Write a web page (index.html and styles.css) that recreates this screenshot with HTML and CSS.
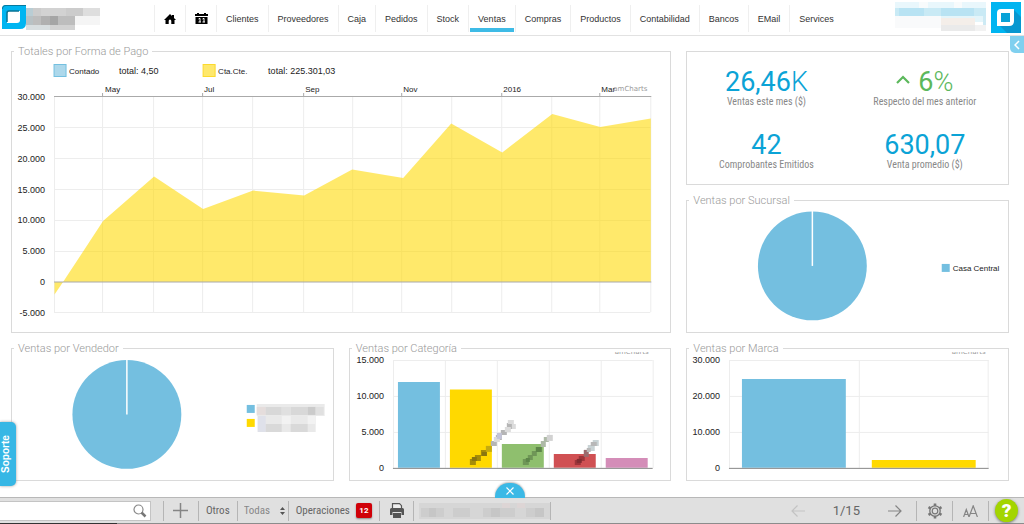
FILE: index.html
```html
<!DOCTYPE html>
<html lang="es">
<head>
<meta charset="utf-8">
<title>Ventas</title>
<link rel="stylesheet" href="styles.css">
</head>
<body>
<header class="topbar">
  <div class="brand">
    <svg class="brand-logo" width="24" height="24" viewBox="0 0 24 24" aria-hidden="true">
      <path d="M4 0H24V18Q24 24 18 24H0V4Q0 0 4 0Z" fill="#00b5f1"/>
      <path d="M0 4Q0 0 4 0H24V1H4Q1 1 1 4Z" fill="#067a9f"/>
      <path d="M7 6H18V15Q18 18 15 18H5V8Q5 6 7 6Z" fill="#fff"/>
      <path d="M5 17V8Q5 6 7 6H17" fill="none" stroke="#087394" stroke-width="1.5"/>
    </svg>
    <svg class="brand-name" width="84" height="26" viewBox="0 0 84 26" aria-hidden="true">
      <path fill="#b9cdd4" d="M0 3h7v8H0z"/><path fill="#ccc" d="M7 3h8v8H7zM40 3h17v8H40z"/><path fill="#d2d2d2" d="M15 3h25v8H15z"/><path fill="#dedede" d="M57 3h17v8H57z"/>
      <path fill="#b8c1c4" d="M0 11h7v9H0z"/><path fill="#bdbdbd" d="M7 11h8v9H7zM32 11h17v9H32z"/><path fill="#b0b0b0" d="M15 11h9v9h-9z"/><path fill="#a5a5a5" d="M24 11h8v9h-8z"/><path fill="#f5f5f5" d="M49 11h25v9H49z"/>
      <path fill="#d8dee0" d="M0 20h24v5H0z"/><path fill="#d2d2d2" d="M24 20h25v5H24z"/>
    </svg>
  </div>
  <nav class="menu" aria-label="Principal">
    <a class="menu-item menu-icon" href="#" aria-label="Inicio"><svg width="12" height="10" viewBox="0 0 12 10"><path d="M6 0L8 2V1H10V4L12 6H10.500V10H7.300V7Q7.300 5.500 6 5.500T4.700 7V10H1.500V6H0Z"/></svg></a>
    <a class="menu-item menu-icon" href="#" aria-label="Agenda"><svg width="13" height="11" viewBox="0 0 13 11"><path d="M0 1H2V0H4V1H9V0H11V1H13V3H0ZM.5 4H12.500V11H.5Z"/><path d="M3.500 6L5 5.300V9M3.500 9H6M7.500 6L9 5.300V9M7.500 9H10" fill="none" stroke="#fff"/></svg></a>
    <a class="menu-item" href="#">Clientes</a>
    <a class="menu-item" href="#">Proveedores</a>
    <a class="menu-item" href="#">Caja</a>
    <a class="menu-item" href="#">Pedidos</a>
    <a class="menu-item" href="#">Stock</a>
    <a class="menu-item menu-active" href="#" aria-current="page">Ventas</a>
    <a class="menu-item" href="#">Compras</a>
    <a class="menu-item" href="#">Productos</a>
    <a class="menu-item" href="#">Contabilidad</a>
    <a class="menu-item" href="#">Bancos</a>
    <a class="menu-item" href="#">EMail</a>
    <a class="menu-item" href="#">Services</a>
  </nav>
  <div class="account">
    <svg width="93" height="30" viewBox="0 0 93 30" aria-hidden="true">
      <path fill="#e9f7fc" d="M1 0h91v6H1z"/><path fill="#f8fbfc" d="M25 0h9v6h-9zM60 0h8v6h-8z"/>
      <path fill="#c9eaf5" d="M1 6h91v8H1z"/><path fill="#b8e3f3" d="M5 6h25v8H5zM47 6h33v8H47z"/>
      <path fill="#e4f5fa" d="M1 14h91v6H1z"/><path fill="#f9fafb" d="M1 14h46v12H1z"/><path fill="#cdeaf4" d="M89 14h3v9h-3z"/>
      <path fill="#f4eee9" d="M47 16h34v8H47z"/><path fill="#eaeaea" d="M47 23h34v6H47z"/><path fill="#f2f2f2" d="M81 23h11v6H81z"/>
    </svg>
    <svg width="30" height="31" viewBox="0 0 30 31" aria-hidden="true">
      <path d="M0 0H30V31H0Z" fill="#00b5f1"/><path d="M7 22L23 8L30 15V31H16Z" fill="#0797d0"/>
      <path d="M10 7H23V19Q23 24 18 24H6V11Q6 7 10 7Z" fill="#fff"/><path d="M10 11H19V20H10Z" fill="#08a2d7"/>
    </svg>
    <button class="drawer" type="button" aria-label="Abrir panel"><svg width="6" height="10" viewBox="0 0 6 10"><path d="M5 1L1 5L5 9" fill="none" stroke="#fff" stroke-width="1.500"/></svg></button>
  </div>
</header>

<main class="board">
  <section class="panel panel-wide">
    <h2 class="panel-title">Totales por Forma de Pago</h2>
    <svg class="chart" viewBox="12 52 658 280" role="img" aria-label="Totales por Forma de Pago">
      <path d="M54 64.500h12v12H54z" fill="#add8eb" stroke="#74c0e0"/><text x="69" y="74" class="small">Contado</text><text x="119" y="74">total: 4,50</text>
      <path d="M203 64.500h12v12h-12z" fill="#fee86c" stroke="#fcda2d"/><text x="218" y="74" class="small">Cta.Cte.</text><text x="268" y="74">total: 225.301,03</text>
      <path class="grid" d="M54 127.500H650M54 158.500H650M54 189.500H650M54 220.500H650M54 251.500H650M54 312.500H650M54.500 97V312M102.500 97V312M153.500 97V312M202.500 97V312M252.500 97V312M303.500 97V312M352.500 97V312M401.500 97V312M451.500 97V312M501.500 97V312M551.500 97V312M599.500 97V312M650.500 97V312"/>
      <path d="M54.500 282V294.500L63 282L103 221L154 176.500L203 209L253 190.500L304 195.500L352 169.500L403 178L451 123.500L502 152.500L552 114L600 127L650.500 118.500V282Z" fill="#ffd900" fill-opacity=".58"/>
      <path class="axis" d="M54 96.500H651M102.500 93V97M202.500 93V97M303.500 93V97M401.500 93V97M501.500 93V97M599.500 93V97M54 282H651"/>
      <g class="small"><text x="105" y="92">May</text><text x="204" y="92">Jul</text><text x="305" y="92">Sep</text><text x="403" y="92">Nov</text><text x="503" y="92">2016</text><text x="601" y="92">Mar</text></g>
      <text x="647" y="91" class="credit">amCharts</text>
      <g class="scale"><text x="45" y="100">30.000</text><text x="45" y="131">25.000</text><text x="45" y="162">20.000</text><text x="45" y="193">15.000</text><text x="45" y="223">10.000</text><text x="45" y="254">5.000</text><text x="45" y="285">0</text><text x="45" y="316">-5.000</text></g>
    </svg>
  </section>

  <section class="panel kpis" aria-label="Indicadores">
    <div class="kpi"><strong class="kpi-value">26,46<span class="unit">K</span></strong><span class="kpi-label">Ventas este mes ($)</span></div>
    <div class="kpi"><strong class="kpi-value kpi-up"><svg class="caret" width="14" height="20" viewBox="0 0 14 20" aria-hidden="true"><path d="M1 8L7 2L13 8" fill="none" stroke="#5cb85c" stroke-width="2.200"/></svg> 6<span class="unit">%</span></strong><span class="kpi-label">Respecto del mes anterior</span></div>
    <div class="kpi"><strong class="kpi-value">42</strong><span class="kpi-label">Comprobantes Emitidos</span></div>
    <div class="kpi"><strong class="kpi-value">630,07</strong><span class="kpi-label">Venta promedio ($)</span></div>
  </section>

  <section class="panel">
    <h2 class="panel-title">Ventas por Sucursal</h2>
    <svg class="chart" viewBox="687 201 321 131" role="img" aria-label="Ventas por Sucursal">
      <circle cx="812.500" cy="266" r="54.500" fill="#74bfe0"/><path d="M812.500 211V266" stroke="#fff" stroke-width="1.500"/>
      <path d="M942 264h8v8h-8z" fill="#74bfe0"/><text x="953" y="271" class="small">Casa Central</text>
    </svg>
  </section>

  <section class="panel">
    <h2 class="panel-title">Ventas por Vendedor</h2>
    <svg class="chart" viewBox="12 349 321 131" role="img" aria-label="Ventas por Vendedor">
      <circle cx="127" cy="414.500" r="54.500" fill="#74bfe0"/><path d="M127 359V414.500" stroke="#fff" stroke-width="1.500"/>
      <path d="M247 405h8v8h-8z" fill="#74bfe0"/><path d="M247 419h8v8h-8z" fill="#ffd900"/>
      <path fill="#eaeaea" d="M257 404h68v12h-68z"/><path fill="#e5dddc" d="M257 407h9v8h-9z"/><path fill="#d8d8d8" d="M266 407h16v8h-16zM291 407h17v8h-17z"/><path fill="#cbcbcb" d="M308 407h8v8h-8z"/><path fill="#e0e0e0" d="M282 407h9v8h-9zM316 407h8v8h-8z"/>
      <path fill="#e9e9e9" d="M258 416h58v16h-58z"/><path fill="#dfe1ea" d="M258 416h8v16h-8z"/><path fill="#d9d9d9" d="M266 424h16v8h-16zM291 424h17v8h-17z"/><path fill="#f2f2f2" d="M308 416h8v8h-8zM282 416h9v8h-9z"/>
    </svg>
  </section>

  <section class="panel">
    <h2 class="panel-title">Ventas por Categoría</h2>
    <svg class="chart" viewBox="349 349 321 131" role="img" aria-label="Ventas por Categoría">
      <defs><clipPath id="cut-cat"><path d="M600 352h60v5h-60z"/></clipPath></defs>
      <text x="648" y="354" class="credit" clip-path="url(#cut-cat)">amCharts</text>
      <path class="grid" d="M392 360.500H652M392 396.500H652M392 432.500H652M392.500 360V468M444.500 360V468M496.500 360V468M548.500 360V468M600.500 360V468M652.500 360V468"/>
      <path fill="#74bfe0" d="M397 382h42v86h-42z"/><path fill="#ffd900" d="M449 389.500h42V468h-42z"/><path fill="#8fbf6e" d="M501 444h42v24h-42z"/><path fill="#d05053" d="M553 454h42v14h-42z"/><path fill="#d48db8" d="M605 458h42v10h-42z"/>
      <path class="base" d="M392 468.500H652"/>
      <path fill="#a58d08" d="M469 459h6v6h-6zM474 455h6v6h-6zM480 450h6v6h-6z"/><path fill="#897710" d="M471 457h5v4h-5zM481 452h5v4h-5z"/><path fill="#c4aa10" d="M485 446h6v6h-6z"/>
      <path fill="#b5b5b5" d="M490 441h6v5h-6zM495 435h6v5h-6zM500 430h6v5h-6zM506 423h6v6h-6z"/><path fill="#dcdcdc" d="M493 437h6v5h-6zM504 427h6v5h-6zM507 420h6v4h-6zM511 424h4v5h-4z"/><path fill="#c3c4d7" d="M496 433h5v6h-5z"/>
      <path fill="#6f9657" d="M522 459h6v6h-6zM527 455h5v5h-5zM531 451h5v5h-5z"/><path fill="#5d8649" d="M535 447h6v5h-6zM525 458h4v4h-4z"/><path fill="#aebaa7" d="M540 441h5v6h-5zM543 437h5v5h-5z"/><path fill="#d2d2d2" d="M546 435h6v6h-6z"/>
      <path fill="#9d353a" d="M574 460h6v5h-6zM578 456h6v5h-6z"/><path fill="#812d32" d="M576 459h5v4h-5z"/><path fill="#9b6a6d" d="M583 450h5v7h-5z"/><path fill="#c9d3d5" d="M587 445h7v6h-7zM592 440h6v6h-6z"/><path fill="#b8b8b8" d="M590 442h6v4h-6zM586 448h4v4h-4z"/>
      <g class="scale"><text x="383" y="363">15.000</text><text x="383" y="399">10.000</text><text x="383" y="435">5.000</text><text x="383" y="471">0</text></g>
    </svg>
  </section>

  <section class="panel">
    <h2 class="panel-title">Ventas por Marca</h2>
    <svg class="chart" viewBox="687 349 321 131" role="img" aria-label="Ventas por Marca">
      <defs><clipPath id="cut-brand"><path d="M940 352h60v5h-60z"/></clipPath></defs>
      <text x="986" y="354" class="credit" clip-path="url(#cut-brand)">amCharts</text>
      <path class="grid" d="M729 360.500H989M729 396.500H989M729 432.500H989M729.500 360V468M859.500 360V468M988.500 360V468"/>
      <path fill="#74bfe0" d="M742 379h104v89H742z"/><path fill="#ffd900" d="M872 460h104v8H872z"/>
      <path class="base" d="M729 468.500H989"/>
      <g class="scale"><text x="720" y="363">30.000</text><text x="720" y="399">20.000</text><text x="720" y="435">10.000</text><text x="720" y="471">0</text></g>
    </svg>
  </section>
</main>

<button class="support" type="button">Soporte</button>

<footer class="toolbar">
  <button class="toolbar-close" type="button" aria-label="Cerrar barra"><svg width="8" height="8" viewBox="0 0 8 8"><path d="M.5 .5L7.500 7.500M7.500 .5L.5 7.500" stroke="#fff" stroke-width="1.200"/></svg></button>
  <div class="search">
    <input class="search-box" type="text" aria-label="Buscar">
    <svg class="search-icon" width="14" height="14" viewBox="0 0 14 14" aria-hidden="true"><circle cx="5.500" cy="5.500" r="4.500" fill="none" stroke="#888" stroke-width="1.200"/><path d="M8.500 8.500L12.500 12.500" stroke="#777" stroke-width="2.500"/></svg>
  </div>
  <div class="tools">
    <button class="tool tool-add" type="button" aria-label="Agregar"><svg width="15" height="15" viewBox="0 0 15 15"><path d="M7.500 0V15M0 7.500H15" stroke="#858585" stroke-width="1.500"/></svg></button>
    <button class="tool" type="button">Otros</button>
    <label class="tool tool-filter"><select class="filter" aria-label="Filtro"><option>Todas</option></select><svg width="5" height="8" viewBox="0 0 5 8" aria-hidden="true"><path d="M0 3L2.500 0L5 3ZM0 5L2.500 8L5 5Z" fill="#555"/></svg></label>
    <button class="tool" type="button">Operaciones <span class="badge">12</span></button>
    <button class="tool tool-print" type="button" aria-label="Imprimir"><svg width="14" height="15" viewBox="0 0 14 15"><path d="M2.500 5V.7H9.500L11.500 2.700V5" fill="#eee" stroke="#555" stroke-width="1.200"/><path d="M1.500 5H12.500Q14 5 14 6.500V12H11.500V9H2.500V12H0V6.500Q0 5 1.500 5ZM3 10H11V15H3Z" fill="#555"/></svg></button>
    <div class="tool tool-status"><svg width="132" height="20" viewBox="0 0 132 20" aria-hidden="true">
      <path fill="#d6d6d6" d="M0 2h131v16H0z"/><path fill="#cdcdcd" d="M2 7h8v9H2zM17 7h8v9h-8zM34 7h17v9H34zM64 7h8v9h-8zM81 7h15v9H81zM107 7h9v9h-9z"/><path fill="#c6c6c6" d="M10 7h7v9h-7zM72 7h9v9h-9zM116 7h9v9h-9z"/><path fill="#ddd5d5" d="M83 2h8v5h-8zM98 2h8v5h-8z"/><path d="M131.500 1V19" stroke="#b5b5b5"/>
    </svg></div>
  </div>
  <div class="pager">
    <button class="arrow" type="button" aria-label="Anterior"><svg width="14" height="12" viewBox="0 0 14 12"><path d="M14 6H1M6.500 .5L1 6L6.500 11.500" fill="none" stroke="#c3c3c3" stroke-width="1.200"/></svg></button>
    <span class="page">1/15</span>
    <button class="arrow" type="button" aria-label="Siguiente"><svg width="14" height="12" viewBox="0 0 14 12"><path d="M0 6H13M7.500 .5L13 6L7.500 11.500" fill="none" stroke="#858585" stroke-width="1.200"/></svg></button>
  </div>
  <div class="options">
    <button class="option" type="button" aria-label="Configuración"><svg width="16" height="16" viewBox="0 0 16 16" fill="none" stroke="#777"><circle cx="8" cy="8" r="5.200" stroke-width="1.300"/><circle cx="8" cy="8" r="2.800" stroke-width="1.200"/><path d="M8 .5V3M8 13V15.500M1.500 4.200L3.700 5.500M12.300 10.500L14.500 11.800M1.500 11.800L3.700 10.500M12.300 5.500L14.500 4.200" stroke-width="2.600"/></svg></button>
    <button class="option" type="button" aria-label="Tamaño de letra"><svg width="15" height="12" viewBox="0 0 15 12" fill="none" stroke="#858585" stroke-width="1.200"><path d="M.6 12L3.300 4.500L6 12M1.500 9.500H5.200M6 12L10.200 .8L14.400 12M7.400 8.500H13"/></svg></button>
    <button class="option" type="button" aria-label="Ayuda"><span class="help">?</span></button>
  </div>
</footer>
</body>
</html>
```
FILE: styles.css
```css
* { box-sizing: border-box; }

body {
  margin: 0;
  min-height: 100vh;
  display: flex;
  flex-direction: column;
  position: relative;
  background: #fff;
  color: #444;
  font: 10px/12px Roboto, "Liberation Sans", sans-serif;
}

button, select, input { font: inherit; color: inherit; border: 0; margin: 0; padding: 0; background: none; }
button { cursor: pointer; }
svg { display: block; }

.topbar {
  display: flex;
  height: 36px;
  padding-top: 5px;
  border-bottom: 1px solid #e2e2e2;
}
.brand { display: flex; width: 154px; padding-left: 2px; }
.menu { display: flex; height: 27px; font: 9px/12px "Liberation Sans", Arial, sans-serif; }
.menu-item {
  display: flex;
  align-items: center;
  padding: 0 9px;
  border-left: 1px solid #efefef;
  color: #333;
  text-decoration: none;
}
.menu-icon { width: 31px; justify-content: center; padding: 0; fill: #000; }
.menu-active { position: relative; }
.menu-active::after {
  content: "";
  position: absolute;
  inset: auto 1px 0 1px;
  height: 4px;
  background: #3ebbe6;
}
.account { display: flex; position: relative; margin: -3px 3px 0 auto; gap: 4px; }
.drawer {
  position: absolute;
  top: 34px;
  right: -3px;
  display: grid;
  place-items: center;
  width: 14px;
  height: 17px;
  border-bottom-left-radius: 5px;
  background: #80d0ef;
}

.board {
  display: grid;
  grid-template-columns: repeat(3, 1fr);
  gap: 15px;
  padding: 15px 15px 15px 11px;
}
.panel { position: relative; min-width: 0; border: 1px solid #dadada; }
.panel-wide { grid-column: span 2; grid-row: span 2; }
.panel-title {
  position: absolute;
  top: -7px;
  left: 2px;
  margin: 0;
  padding: 0 4px;
  background: #fff;
  color: #999;
  font-size: 11px;
  font-weight: 300;
  line-height: 14px;
}

.chart { width: 100%; height: auto; font: 9px "Liberation Sans", sans-serif; fill: #222; }
.chart .small { font-size: 8px; }
.chart .credit { font-size: 7px; fill: #999; text-anchor: end; font-family: "DejaVu Sans", sans-serif; }
.chart .scale { text-anchor: end; }
.grid { fill: none; stroke: #ededed; }
.axis { fill: none; stroke: #aaa; }
.base { fill: none; stroke: #888; }

.kpis { display: grid; grid-template-columns: 1fr 1fr; row-gap: 23px; padding: 16px 4px 12px 0; }
.kpi { display: flex; flex-direction: column; align-items: center; }
.kpi-value { color: #0ba3d6; font-size: 27px; font-weight: 400; line-height: 28px; }
.kpi-up { display: flex; color: #5cb85c; }
.caret { margin: 7px 8px 0 0; }
.unit { font-weight: 300; }
.kpi-label { color: #888; font-family: "Roboto Condensed", Roboto, sans-serif; }

.support {
  position: absolute;
  left: 0;
  bottom: 38px;
  width: 16px;
  height: 64px;
  padding-left: 4px;
  border-radius: 5px 0 0 5px;
  background: #36b7e5;
  box-shadow: 0 0 3px #999;
  color: #fff;
  font: bold 10px/12px "Liberation Sans", sans-serif;
  writing-mode: vertical-rl;
  transform: rotate(180deg);
}

.toolbar {
  position: relative;
  display: flex;
  align-items: center;
  height: 27px;
  margin-top: auto;
  border-top: 1px solid #b8b8b8;
  border-bottom: 1px solid #8c8c8c;
  background: #e0e0e0;
  color: #666;
  font-family: "Roboto Condensed", Roboto, sans-serif;
}
.toolbar::after {
  content: "";
  position: absolute;
  top: 100%;
  left: 0;
  width: 117px;
  height: 1px;
  background: #333;
}
.toolbar-close {
  position: absolute;
  bottom: 100%;
  left: calc(50% - 17px);
  display: grid;
  place-items: center;
  width: 30px;
  height: 15px;
  border-radius: 14px 14px 0 0;
  background: #3bb9e6;
  box-shadow: 0 -1px 2px #bbb;
}
.search { position: relative; width: 151px; margin-right: 12px; }
.search-box { display: block; width: 100%; height: 20px; padding: 0 24px 0 6px; border: 1px solid #c4c4c4; border-left: 0; background: #fff; }
.search-icon { position: absolute; top: 3px; right: 4px; }
.tools, .options { display: flex; }
.tool {
  display: flex;
  align-items: center;
  height: 20px;
  padding: 0 7px;
  border-left: 1px solid #b5b5b5;
  font-size: 11px;
}
.tool-add { width: 35px; padding: 0 9px; }
.tool-filter { padding: 0 3px 0 6px; gap: 8px; color: #888; }
.filter { width: 28px; appearance: none; }
.badge {
  width: 16px;
  margin-left: 6px;
  border-radius: 2px;
  background: #d00008;
  box-shadow: 0 1px 2px #888;
  color: #fff;
  font: bold 8px/15px Roboto, sans-serif;
  text-align: center;
}
.tool-print { padding: 0 9px 0 10px; }
.tool-status { padding: 0 5px; }
.pager { display: flex; align-items: center; gap: 28px; margin: 0 14px 0 auto; font: 13px/16px Roboto, sans-serif; }
.option {
  display: grid;
  place-content: center;
  width: 36px;
  height: 20px;
  border-left: 1px solid #b5b5b5;
}
.help {
  width: 23px;
  height: 23px;
  border-radius: 50%;
  background: #a3d500;
  box-shadow: 0 1px 3px #777;
  color: #fff;
  font: 900 19px/23px Roboto, sans-serif;
}
```
